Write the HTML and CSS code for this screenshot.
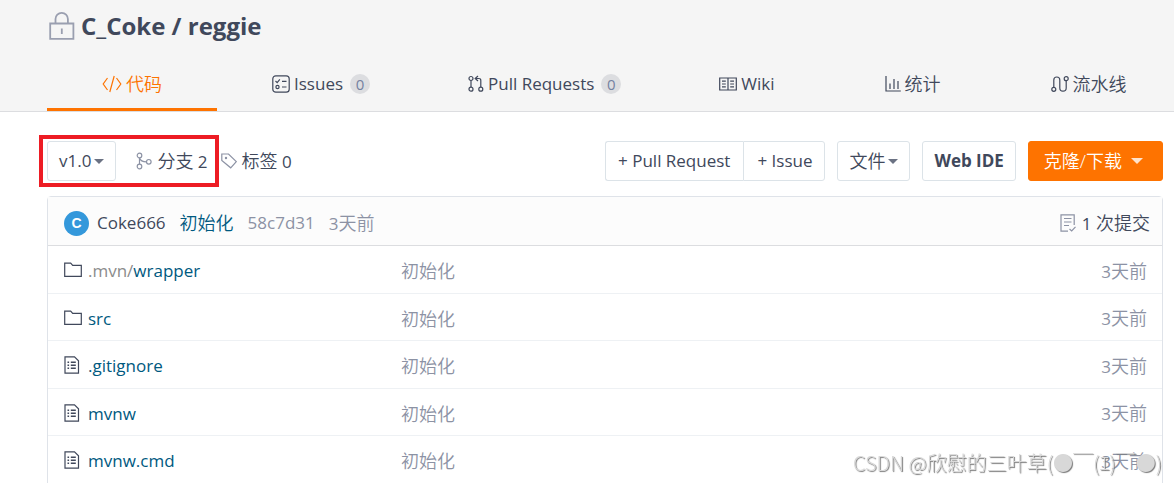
FILE: index.html
```html
<!DOCTYPE html>
<html lang="zh-CN">
<head>
<meta charset="utf-8">
<title>C_Coke / reggie</title>
<link rel="stylesheet" href="styles.css">
</head>
<body>
<svg class="defs" aria-hidden="true">
  <symbol id="folder" viewBox="0 0 18 16"><path d="M.7 14.3V1.2h6l2 2.2h8.6v10.9z"/></symbol>
  <symbol id="file" viewBox="0 0 16 18"><path d="M1 .8h9.5l4 4v12.4H1z"/><path d="M3.5 6.2h1.6M3.5 9.2h1.6M3.5 12.2h1.6M6.8 6.2h5M6.8 9.2h5M6.8 12.2h5" stroke-width="1.5"/></symbol>
</svg>
<header class="head">
  <h1 class="title">
    <svg class="lock" viewBox="0 0 26 30"><path d="M1.2 12.5h23.2v15.3H1.2zM6.5 12.5V8a6.2 6.2 0 0 1 12.4 0v4.5M12.8 17.5v5.5"/></svg>
    <span>C_Coke / reggie</span>
  </h1>
  <nav class="tabs">
    <a class="tab active" href="#"><svg class="ic w20" viewBox="0 0 20 18"><path d="M5.5 3L1.2 9l4.3 6M14.5 3l4.3 6-4.3 6M12.2 1L7.8 17"/></svg><span class="zh">代码</span></a>
    <a class="tab counted" href="#"><svg class="ic w18" viewBox="0 0 18 18"><rect x=".8" y=".8" width="16.4" height="16.4" rx="3"/><path d="M3.5 6l1.7 1.6 2.6-3.2M10 6.3h4.5M10 12h4.5"/><circle cx="5.5" cy="12" r="1.6"/></svg><span>Issues</span><span class="badge">0</span></a>
    <a class="tab counted" href="#"><svg class="ic w16" viewBox="0 0 16 18"><circle cx="3" cy="3.5" r="2"/><circle cx="3" cy="14.2" r="2"/><circle cx="12.8" cy="14.2" r="2"/><path d="M3 5.5v6.7M12.8 12.2V5.5q0-2-2-2H7.5M10 1L7.2 3.5 10 6"/></svg><span>Pull Requests</span><span class="badge">0</span></a>
    <a class="tab" href="#"><svg class="ic w18" viewBox="0 0 18 18"><path d="M.7 3h16.6v12H.7zM9 3v12M3 6.2h3.8M3 9h3.8M3 11.8h3.8M11.2 6.2H15M11.2 9H15M11.2 11.8H15"/></svg><span>Wiki</span></a>
    <a class="tab" href="#"><svg class="ic w16" viewBox="0 0 16 18"><path d="M1 1v15h14.8M5 14V8.5M9 14V4M13 14V6"/></svg><span class="zh">统计</span></a>
    <a class="tab" href="#"><svg class="ic w18" viewBox="0 0 18 18"><circle cx="2.8" cy="14.3" r="2"/><circle cx="15.2" cy="3.7" r="2"/><path d="M2.8 12.3V5a3 3 0 0 1 6 0v8a3.2 3.2 0 0 0 6.4 0V5.7"/></svg><span class="zh">流水线</span></a>
  </nav>
</header>
<main class="main">
  <div class="toolbar">
    <div class="marked">
      <button class="btn branch" type="button">v1.0<i class="caret"></i></button>
      <a class="stat" href="#"><svg class="ic pale w16" viewBox="0 0 16 18"><circle cx="3.5" cy="3.5" r="2.3"/><circle cx="3.5" cy="14.5" r="2.3"/><circle cx="12.8" cy="9.8" r="2.3"/><path d="M3.5 5.8v6.4M3.5 6q1.2 3.8 7 3.8"/></svg><span><span class="zh">分支</span> 2</span></a>
    </div>
    <a class="stat" href="#"><svg class="ic pale w16" viewBox="0 0 16 18"><path d="M.8 2h6.7l7.8 7.6-5.6 6.2L.8 8.5z"/><circle cx="5" cy="6" r=".6"/></svg><span><span class="zh">标签</span> 0</span></a>
    <div class="actions">
      <div class="group"><button class="btn" type="button">+ Pull Request</button><button class="btn" type="button">+ Issue</button></div>
      <button class="btn" type="button"><span class="zh">文件</span><i class="caret"></i></button>
      <button class="btn ide" type="button">Web IDE</button>
      <button class="btn clone" type="button"><span class="zh">克隆/下载</span><i class="caret"></i></button>
    </div>
  </div>
  <section class="card">
    <div class="commit">
      <span class="avatar">C</span>
      <a class="author" href="#">Coke666</a>
      <a class="message zh" href="#">初始化</a>
      <span class="muted">58c7d31</span>
      <span class="muted">3<span class="zh">天前</span></span>
      <a class="count" href="#"><svg class="ic pale w16" viewBox="0 0 16 18"><path d="M14.2 11V.8H1v16.4h7M4 4.5h7.5M4 8h7.5M4 11.5h5M9.5 15l2.2 2 3.8-4.2"/></svg><span>1 <span class="zh">次提交</span></span></a>
    </div>
    <table class="files">
      <tr><td class="name"><a href="#"><svg class="ic w18"><use href="#folder"/></svg><span><span class="dim">.mvn/</span>wrapper</span></a></td><td class="zh">初始化</td><td class="time">3<span class="zh">天前</span></td></tr>
      <tr><td class="name"><a href="#"><svg class="ic w18"><use href="#folder"/></svg><span>src</span></a></td><td class="zh">初始化</td><td class="time">3<span class="zh">天前</span></td></tr>
      <tr><td class="name"><a href="#"><svg class="ic w16"><use href="#file"/></svg><span>.gitignore</span></a></td><td class="zh">初始化</td><td class="time">3<span class="zh">天前</span></td></tr>
      <tr><td class="name"><a href="#"><svg class="ic w16"><use href="#file"/></svg><span>mvnw</span></a></td><td class="zh">初始化</td><td class="time">3<span class="zh">天前</span></td></tr>
      <tr><td class="name"><a href="#"><svg class="ic w16"><use href="#file"/></svg><span>mvnw.cmd</span></a></td><td class="zh">初始化</td><td class="time">3<span class="zh">天前</span></td></tr>
    </table>
  </section>
</main>
<div class="watermark">CSDN @欣慰的三叶草(●￣(ｴ)￣●)</div>
</body>
</html>
```
FILE: styles.css
```css
* { box-sizing: border-box; }
body {
  margin: 0;
  background: #fff;
  color: #40485b;
  font: 17px/24px "Open Sans", "Noto Sans CJK SC", sans-serif;
  overflow: hidden;
}
a { color: inherit; text-decoration: none; }
.zh { font-size: 18px; font-weight: 350; }
.defs { position: absolute; width: 0; height: 0; }
.ic { height: 18px; flex: none; fill: none; stroke: currentColor; stroke-width: 1.2; }
.w16 { width: 16px; }
.w18 { width: 18px; }
.w20 { width: 20px; }
.pale { color: #8c92a4; }

.head {
  background: #f5f5f5;
  border-bottom: 1px solid #dcdde0;
  padding: 8px 0 0 47px;
  overflow: hidden;
}
.title {
  margin: 0;
  display: flex;
  align-items: center;
  gap: 6px;
  height: 36px;
  padding-left: 2px;
  font-size: 24px;
  font-weight: 700;
}
.lock { width: 26px; height: 30px; fill: none; stroke: #9a9fb0; stroke-width: 1.8; }
.tabs { display: flex; height: 67px; }
.tab {
  display: flex;
  flex: none;
  align-items: center;
  gap: 4px;
  padding: 15px 55px 0;
  border-bottom: 3px solid transparent;
}
.active { color: #fe7300; border-color: #fe7300; }
.counted { padding-right: 43px; }
.badge {
  margin-left: 3px;
  width: 20px;
  height: 20px;
  border-radius: 10px;
  background: #dcdde0;
  color: #7482a0;
  font-size: 15px;
  line-height: 20px;
  text-align: center;
}

.main { padding: 23px 11px 0 39px; }
.toolbar { display: flex; align-items: center; }
.marked {
  display: flex;
  align-items: center;
  gap: 20px;
  height: 52px;
  padding: 0 7px 0 4px;
  border: 4px solid #ed1c24;
}
.stat { display: flex; align-items: center; gap: 5px; white-space: nowrap; }
.marked + .stat { margin-left: 2px; }
.btn {
  display: flex;
  align-items: center;
  gap: 3px;
  height: 40px;
  padding: 0 11px;
  border: 1px solid #dce3e8;
  border-radius: 3px;
  background: #fff;
  color: #40485b;
  font: inherit;
  white-space: nowrap;
}
.caret { border: 5px solid transparent; border-top-color: #6b7283; border-bottom: 0; }
.actions { display: flex; gap: 12px; margin-left: auto; }
.group { display: flex; }
.group .btn { padding: 0 12px; }
.group .btn:first-child { padding-right: 13px; border-radius: 3px 0 0 3px; border-right: 0; }
.group .btn:last-child { padding-left: 13px; border-radius: 0 3px 3px 0; }
.ide { font-weight: 700; }
.clone { background: #fe7300; border-color: #fe7300; color: #fff; padding: 0 19px 0 15px; gap: 9px; }
.clone .caret { border-width: 6px 6px 0; border-top-color: #ffe3cc; }

.card {
  margin: 9px 0 0 8px;
  border: 1px solid #dfe3e9;
  border-radius: 4px 4px 0 0;
}
.commit {
  display: flex;
  align-items: center;
  height: 49px;
  padding: 4px 12px 0 16px;
  gap: 14px;
  background: #fcfcfc;
  border-bottom: 1px solid #dcdde0;
}
.avatar {
  width: 25px;
  height: 25px;
  margin-right: -6px;
  border-radius: 50%;
  background: #3498db;
  color: #fff;
  font: 700 14px/25px "Liberation Sans", sans-serif;
  text-align: center;
}
.message, .files a { color: #005980; }
.muted { color: #8c92a4; }
.count { display: flex; align-items: center; gap: 6px; margin-left: auto; }
.files { width: 100%; border-collapse: collapse; color: #8c92a4; table-layout: fixed; }
.files tr { height: 47px; border-bottom: 1px solid #eef1f4; }
.files tr:nth-child(2n+3) { height: 48px; }
.files td { padding: 4px 15px 0 0; }
.files .name { width: 353px; padding-left: 16px; }
.name a { display: flex; align-items: center; gap: 6px; }
.name .w16 + span { margin-left: 2px; }
.name .ic { color: #40485b; margin-bottom: 2px; }
.files .dim { color: #8c8c8c; }
.files .time { text-align: right; }

.watermark {
  position: fixed;
  right: 12px;
  bottom: 6px;
  color: #d8d8d8;
  font: 300 20px/28px "Noto Sans CJK SC", sans-serif;
  text-shadow: 1px 1px 1px #777;
  white-space: nowrap;
}
```
